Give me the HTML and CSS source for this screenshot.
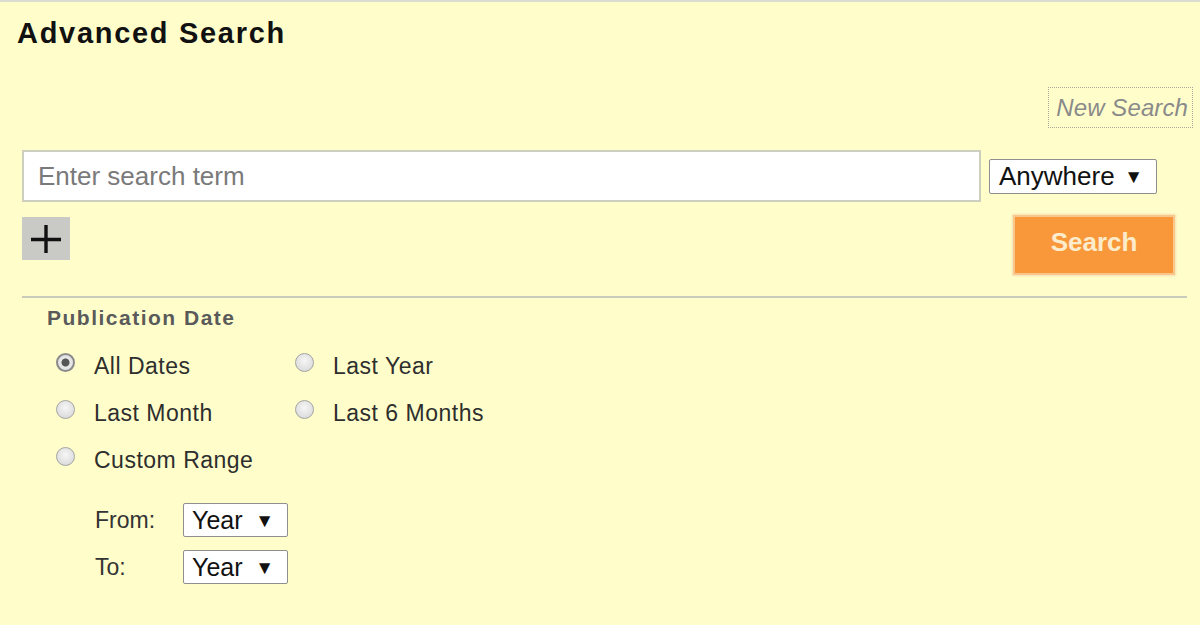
FILE: index.html
```html
<!DOCTYPE html>
<html lang="en">
<head>
<meta charset="utf-8">
<title>Advanced Search</title>
<link rel="stylesheet" href="styles.css">
</head>
<body>
<div class="page">
  <h1 class="title">Advanced Search</h1>
  <div class="toolbar"><a class="new-search" href="#">New Search</a></div>
  <div class="search-row">
    <input class="term" type="text" placeholder="Enter search term">
    <div class="select anywhere"><span>Anywhere</span><span class="arrow">&#9660;</span></div>
  </div>
  <div class="action-row">
    <button class="add" type="button" aria-label="Add row">
      <svg width="30" height="28" viewBox="0 0 30 28"><path d="M0 14.5H30M15 0V28" stroke="#111" stroke-width="3.4" fill="none"/></svg>
    </button>
    <button class="search-btn" type="button">Search</button>
  </div>
  <hr class="divider">
  <section class="filters">
    <div class="filter-title">Publication Date</div>
    <div class="radios">
      <label class="opt"><span class="radio checked"></span>All Dates</label>
      <label class="opt"><span class="radio"></span>Last Year</label>
      <label class="opt"><span class="radio"></span>Last Month</label>
      <label class="opt"><span class="radio"></span>Last 6 Months</label>
      <label class="opt"><span class="radio"></span>Custom Range</label>
    </div>
    <div class="range">
      <span class="range-label">From:</span>
      <div class="select year"><span>Year</span><span class="arrow">&#9660;</span></div>
      <span class="range-label">To:</span>
      <div class="select year"><span>Year</span><span class="arrow">&#9660;</span></div>
    </div>
  </section>
</div>
</body>
</html>
```
FILE: styles.css
```css
* { box-sizing: border-box; }
html, body { margin: 0; height: 100%; }
body {
  background: #fffecb;
  font-family: "Liberation Sans", Arial, sans-serif;
  color: #333;
}
.page {
  min-height: 100%;
  border-top: 2px solid #dcdcd0;
  padding: 0 7px 0 22px;
}
.title {
  margin: 14px 0 0 -5px;
  font-size: 29px;
  line-height: 34px;
  letter-spacing: 1.7px;
  font-weight: bold;
  color: #111;
}
.toolbar {
  margin-top: 37px;
  display: flex;
  justify-content: flex-end;
}
.new-search {
  display: inline-block;
  border: 1px dotted #a8a89a;
  padding: 0 4px 0 7px;
  line-height: 39px;
  font-size: 24px;
  letter-spacing: 0.1px;
  font-style: italic;
  color: #8a8a8a;
  text-decoration: none;
}
.search-row {
  margin-top: 22px;
  display: flex;
  align-items: center;
  gap: 8px;
}
.term {
  width: 959px;
  height: 52px;
  border: 2px solid #cfcfc0;
  background: #fff;
  padding: 0 14px;
  font-family: "Liberation Sans", Arial, sans-serif;
  font-size: 26px;
  color: #333;
  outline: none;
}
.term::placeholder { color: #7a7a7a; }
.select {
  display: flex;
  align-items: center;
  justify-content: space-between;
  background: #fff;
  border: 1px solid #8f8f8f;
  border-radius: 2px;
  color: #111;
  font-size: 26px;
}
.select .arrow { font-size: 19px; line-height: 1; }
.anywhere {
  width: 168px;
  height: 35px;
  padding: 0 13px 0 9px;
}
.action-row {
  margin-top: 13px;
  display: flex;
  justify-content: space-between;
  align-items: flex-start;
  padding-right: 18px;
}
.add {
  margin-top: 2px;
  width: 48px;
  height: 43px;
  border: 0;
  padding: 0;
  background: #c9c9c6;
  display: flex;
  align-items: center;
  justify-content: center;
}
.search-btn {
  width: 162px;
  height: 60px;
  border: 2px solid #f9c68c;
  background: #f8983a;
  color: #fdeccb;
  font-family: "Liberation Sans", Arial, sans-serif;
  font-weight: bold;
  font-size: 26px;
  padding: 0 0 5px;
  box-shadow: 0 0 2px 1px #f7dfb0;
}
.divider {
  margin: 21px 6px 0 0;
  border: 0;
  height: 2px;
  background: #cbcbbb;
}
.filters { padding-left: 25px; }
.filter-title {
  margin-top: 8px;
  font-size: 21px;
  line-height: 24px;
  letter-spacing: 1.5px;
  font-weight: bold;
  color: #5a5a5a;
}
.radios {
  margin-top: 13px;
  display: grid;
  grid-template-columns: 239px auto;
  grid-auto-rows: 47px;
  padding-left: 9px;
}
.opt {
  display: flex;
  align-items: center;
  gap: 19px;
  font-size: 23px;
  letter-spacing: 0.5px;
  color: #2e2e2e;
}
.radio {
  flex: none;
  width: 19px;
  height: 19px;
  border-radius: 50%;
  border: 1px solid #a3a3a3;
  background: radial-gradient(circle at 50% 40%, #f6f6f6 0%, #dedede 70%, #cbcbcb 100%);
  margin-bottom: 8px;
}
.radio.checked {
  border: 2px solid #8a8a8a;
  background: radial-gradient(circle, #555 0, #555 3.5px, #e8e8e8 4.5px, #dcdcdc 100%);
}
.range {
  margin-top: 19px;
  display: grid;
  grid-template-columns: 88px 105px;
  grid-auto-rows: 34px;
  row-gap: 13px;
  align-items: center;
  padding-left: 48px;
}
.range-label {
  font-size: 23px;
  color: #333;
}
.year {
  height: 34px;
  padding: 0 13px 0 8px;
  font-size: 25px;
}
```
